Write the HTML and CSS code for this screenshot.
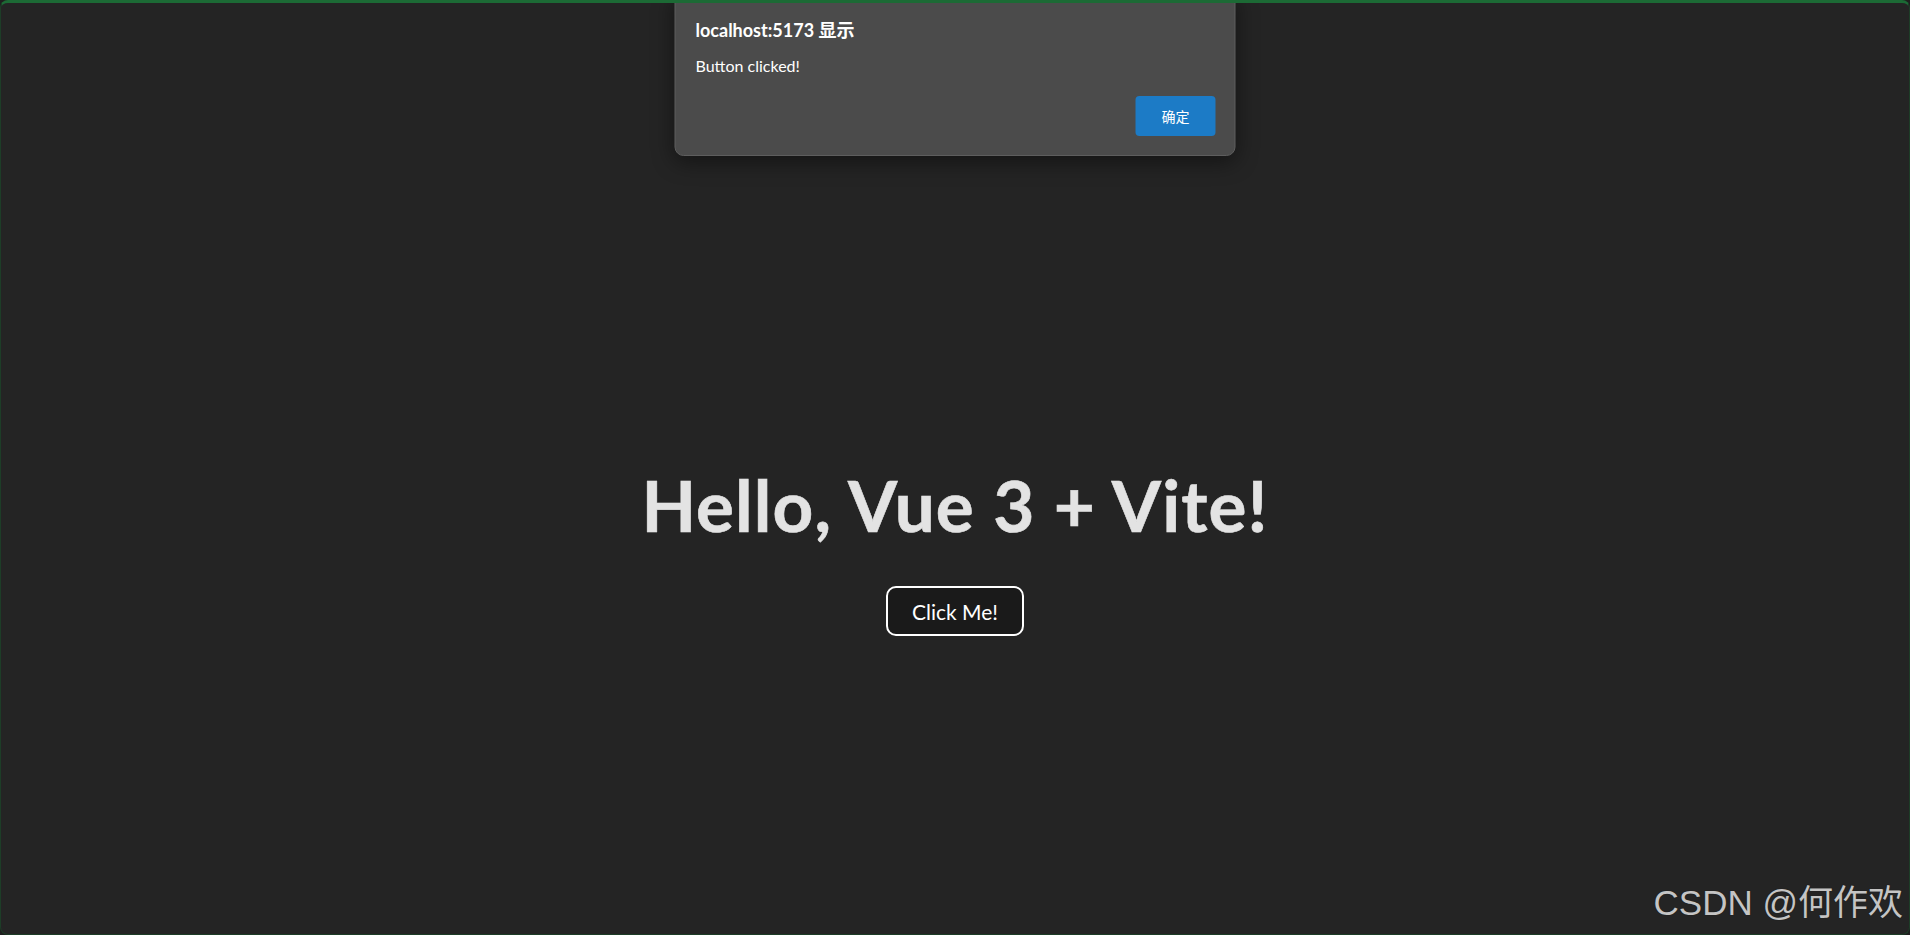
FILE: index.html
```html
<!DOCTYPE html>
<html lang="en">
<head>
  <meta charset="UTF-8" />
  <meta name="viewport" content="width=device-width, initial-scale=1.0"/>
  <title>Vite + Vue</title>
  <link rel="stylesheet" href="styles.css">
</head>
<body>

  <div class="window">
    <div id="app">
      <h1>Hello, Vue 3 + Vite!</h1>
      <button class="click-btn" id="clickBtn">Click Me!</button>
    </div>

    <!-- alert dialog -->
    <div class="dialog">
      <div class="dialog-title">localhost:5173 显示</div>
      <div class="dialog-msg">Button clicked!</div>
      <div class="dialog-actions">
        <button class="ok-btn">确定</button>
      </div>
    </div>

    <div class="watermark">CSDN @何作欢</div>
  </div>

</body>
</html>
```

FILE: styles.css
```css
html, body {
  margin: 0;
  padding: 0;
  height: 100%;
  background-color: #1f1f1f;
}

body {
  font-family: Lato, "Noto Sans CJK SC", sans-serif;
  color: rgba(255, 255, 255, 0.87);
}

.window {
  position: relative;
  height: 935px;
  box-sizing: border-box;
  background-color: #242424;
  border: 1px solid #1d3d27;
  border-top: 3px solid #1c6a35;
  border-radius: 8px;
  overflow: hidden;
}

#app {
  padding-top: 463px;
  text-align: center;
}

h1 {
  margin: 0 0 43px;
  font-size: 71px;
  line-height: 77px;
  font-weight: 700;
  letter-spacing: 1.1px;
  color: #e3e3e3;
  -webkit-text-stroke: 0.6px #e3e3e3;
}

.click-btn {
  width: 138px;
  height: 50px;
  font-family: Lato, sans-serif;
  font-size: 21px;
  color: #fff;
  background-color: #1a1a1a;
  border: 2px solid #fff;
  border-radius: 10px;
  cursor: pointer;
}

/* Dialog */
.dialog {
  position: absolute;
  top: -13px;
  left: 50%;
  transform: translateX(-50%);
  width: 561px;
  box-sizing: border-box;
  padding: 28px 19px 19px 20px;
  background-color: #4b4b4b;
  border: 1px solid #5e5e5e;
  border-radius: 9px;
  box-shadow: 0 6px 22px rgba(0, 0, 0, 0.45);
  color: #fff;
}

.dialog-title {
  font-size: 18px;
  font-weight: 700;
  line-height: 22px;
}

.dialog-msg {
  margin-top: 14px;
  font-size: 16px;
  line-height: 21px;
}

.dialog-actions {
  display: flex;
  justify-content: flex-end;
  margin-top: 20px;
}

.ok-btn {
  width: 80px;
  height: 40px;
  font-family: "Noto Sans CJK SC", sans-serif;
  font-size: 14px;
  color: #fff;
  background-color: #1c7bc6;
  border: none;
  border-radius: 4px;
}

.watermark {
  position: absolute;
  right: 6px;
  bottom: 9px;
  font-family: "Liberation Sans", "Noto Sans CJK SC", sans-serif;
  font-size: 35px;
  color: #c4c4c4;
  text-shadow: 0 0 1px rgba(0, 0, 0, 0.5);
}
```
